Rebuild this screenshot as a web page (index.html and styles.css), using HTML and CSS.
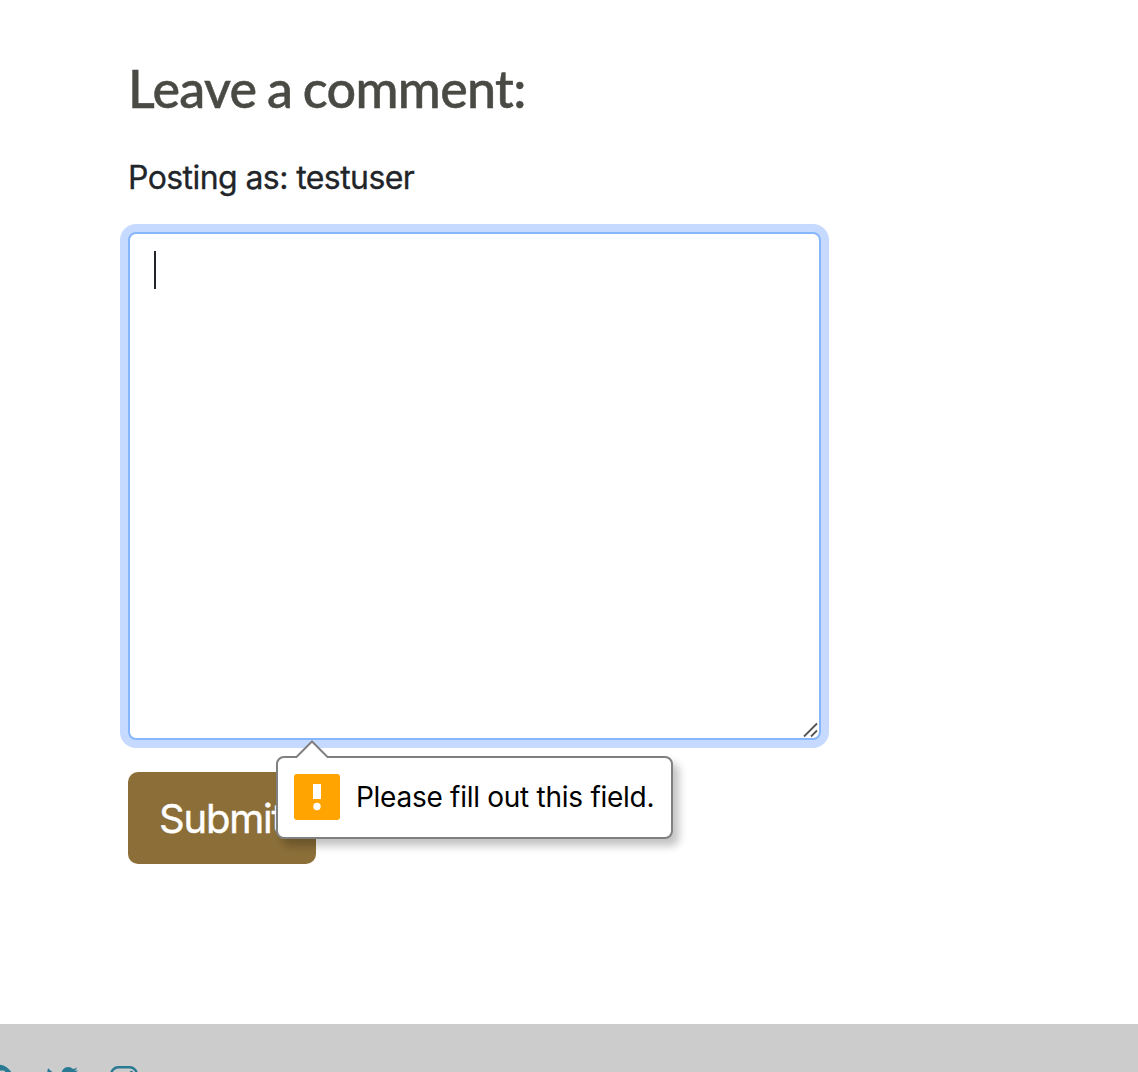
FILE: index.html
```html
<!DOCTYPE html>
<html lang="en">
<head>
<meta charset="utf-8">
<title>Leave a comment</title>
<link rel="stylesheet" href="styles.css">
</head>
<body>
<main class="comments">
  <h3 class="heading"><span>Leave a comment:</span></h3>
  <p class="author"><span>Posting as: testuser</span></p>
  <form class="form">
    <div class="field" role="textbox" aria-label="Comment">
      <span class="caret"></span>
      <svg class="grip" width="16" height="16" viewBox="0 0 16 16"><path d="M2 14.500 15 1.500M9 14.500l6-6" stroke="#555" stroke-width="1.800"/></svg>
    </div>
    <button class="submit" type="button"><span>Submit</span></button>
    <div class="bubble" role="alert">
      <svg class="pointer" width="34" height="18" viewBox="0 0 34 18"><path d="M1 18 17 1.500 33 18z" fill="#fff"/><path d="M0 17h1.500L17 1.500 32.500 17H34" fill="none" stroke="#808080" stroke-width="2"/></svg>
      <svg class="warning" width="46" height="46" viewBox="0 0 46 46"><rect width="46" height="46" rx="3" fill="#ffa400"/><path d="M19 10h8v15h-8z" fill="#fff"/><circle cx="23" cy="32.500" r="3.700" fill="#fff"/></svg>
      <span class="message">Please fill out this field.</span>
    </div>
  </form>
</main>
<footer class="footer">
  <svg width="32" height="32" viewBox="0 0 512 512"><path d="M504 256C504 119 393 8 256 8S8 119 8 256c0 123.780 90.690 226.380 209.250 245V327.690h-63V256h63v-54.640c0-62.150 37-96.480 93.670-96.480 27.140 0 55.520 4.840 55.520 4.840v61h-31.280c-30.800 0-40.410 19.120-40.410 38.730V256h68.780l-11 71.690h-57.780V501C413.310 482.380 504 379.780 504 256z"/></svg>
  <svg width="32" height="32" viewBox="0 0 512 512"><path d="M459.370 151.716c.325 4.548.325 9.097.325 13.645 0 138.720-105.583 298.558-298.558 298.558-59.452 0-114.680-17.219-161.137-47.106 8.447.974 16.568 1.299 25.340 1.299 49.055 0 94.213-16.568 130.274-44.832-46.132-.975-84.792-31.188-98.112-72.772 6.498.974 12.995 1.624 19.818 1.624 9.421 0 18.843-1.300 27.614-3.573-48.081-9.747-84.143-51.980-84.143-102.985v-1.299c13.969 7.797 30.214 12.670 47.431 13.319-28.264-18.843-46.781-51.005-46.781-87.391 0-19.492 5.197-37.360 14.294-52.954 51.655 63.675 129.300 105.258 216.365 109.807-1.624-7.797-2.599-15.918-2.599-24.040 0-57.828 46.782-104.934 104.934-104.934 30.213 0 57.502 12.670 76.670 33.137 23.715-4.548 46.456-13.320 66.599-25.340-7.798 24.366-24.366 44.833-46.132 57.827 21.117-2.273 41.584-8.122 60.426-16.243-14.292 20.791-32.161 39.308-52.628 54.253z"/></svg>
  <svg width="28" height="32" viewBox="0 0 448 512"><path fill-rule="evenodd" d="M132 32h184a132 132 0 0 1 132 132v184a132 132 0 0 1-132 132H132A132 132 0 0 1 0 348V164A132 132 0 0 1 132 32zm0 40a92 92 0 0 0-92 92v184a92 92 0 0 0 92 92h184a92 92 0 0 0 92-92V164a92 92 0 0 0-92-92zm92 69a115 115 0 1 1 0 230 115 115 0 0 1 0-230zm0 40a75 75 0 1 0 0 150 75 75 0 0 0 0-150z"/><circle cx="343.600" cy="136.400" r="26.800"/></svg>
</footer>
</body>
</html>
```
FILE: styles.css
```css
* { box-sizing: border-box; }
body {
  margin: 0;
  height: 1072px;
  overflow: hidden;
  display: flex;
  flex-direction: column;
  background: #fff;
  color: #212529;
  font-family: Inter, "Liberation Sans", sans-serif;
}
.comments {
  height: 1024px;
  flex: none;
  padding: 56px 0 0 128px;
}
.heading {
  margin: 0;
  height: 64px;
  font: 500 52px/64px Lato, sans-serif;
  letter-spacing: -0.65px;
  word-spacing: -2px;
  -webkit-text-stroke: 0.5px #4a4a45;
  color: #4a4a45;
}
.author {
  margin: 34px 0 0;
  height: 48px;
  font-size: 32px;
  line-height: 48px;
  letter-spacing: -0.58px;
  -webkit-text-stroke: 0.3px #212529;
}
.form {
  position: relative;
  width: 693px;
  margin-top: 30px;
}
.field {
  position: relative;
  height: 508px;
  padding: 17px 24px;
  border: 2px solid #86b7fe;
  border-radius: 8px;
  box-shadow: 0 0 0 8px #c6daff;
  background: #fff;
}
.caret {
  display: block;
  width: 2px;
  height: 38px;
  background: #212529;
}
.grip {
  position: absolute;
  right: 1px;
  bottom: 0;
}
.submit {
  display: block;
  width: 188px;
  height: 92px;
  margin-top: 32px;
  padding: 2px 31px 0;
  border: 0;
  border-radius: 10px;
  background: #8c6f38;
  color: #fff;
  font: 400 40px/60px Inter, sans-serif;
  letter-spacing: -1.2px;
  -webkit-text-stroke: 0.4px #fff;
  text-align: left;
}
.bubble {
  position: absolute;
  left: 148px;
  top: 524px;
  width: 397px;
  height: 83px;
  display: flex;
  align-items: center;
  gap: 16px;
  padding: 0 16px 1px;
  border: 2px solid #808080;
  border-radius: 8px;
  background: #fff;
  color: #000;
  box-shadow: 6px 7px 8px rgba(0, 0, 0, .24);
}
.pointer {
  position: absolute;
  left: 17px;
  top: -18px;
}
.warning { flex: none; }
.message {
  font-size: 28px;
  line-height: 36px;
  letter-spacing: -0.27px;
  white-space: nowrap;
}
.footer {
  flex: none;
  height: 48px;
  padding-top: 40px;
  overflow: hidden;
  display: flex;
  gap: 32px;
  background: #ccc;
  fill: #2b7a93;
}
.footer svg { flex: none; }
.footer svg:first-child { margin-left: -18px; }
```
